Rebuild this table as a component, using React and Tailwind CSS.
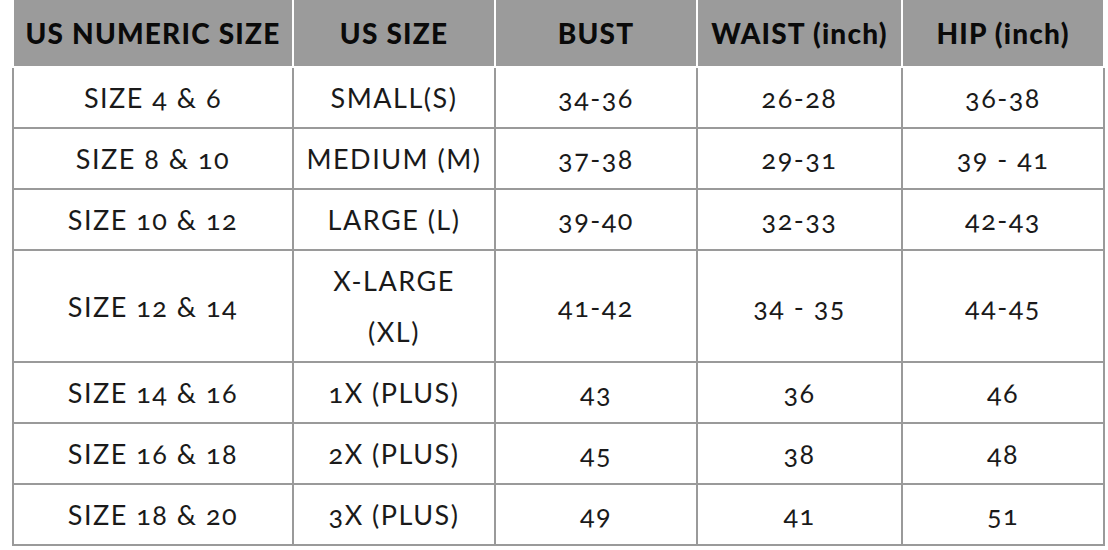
const HEADERS = ["US NUMERIC SIZE", "US SIZE", "BUST", "WAIST (inch)", "HIP (inch)"];

const ROWS = [
  ["SIZE 4 & 6", "SMALL(S)", "34-36", "26-28", "36-38"],
  ["SIZE 8 & 10", "MEDIUM (M)", "37-38", "29-31", "39 - 41"],
  ["SIZE 10 & 12", "LARGE (L)", "39-40", "32-33", "42-43"],
  ["SIZE 12 & 14", "X-LARGE (XL)", "41-42", "34 - 35", "44-45"],
  ["SIZE 14 & 16", "1X (PLUS)", "43", "36", "46"],
  ["SIZE 16 & 18", "2X (PLUS)", "45", "38", "48"],
  ["SIZE 18 & 20", "3X (PLUS)", "49", "41", "51"],
];

// column boxes incl. borders: 282 / 202 / 202 / 205 / 202
const COL_W = ["w-[282px]", "w-[202px]", "w-[202px]", "w-[205px]", "w-[202px]"];

export default function App() {
  return (
    <div className="w-[1108px] h-[550px] bg-white font-['Lato','Liberation_Sans',sans-serif] overflow-hidden">
      <div className="ml-[12px] w-[1093px] flex flex-col">
        {/* Header */}
        <div className="flex">
          {HEADERS.map((h, i) => (
            <div
              key={h}
              className={`${COL_W[i]} h-[68px] bg-[#9b9b9b] border-b-2 border-r-2 border-white ${i === 0 ? "border-l-2" : ""} flex items-center justify-center whitespace-nowrap text-[28px] font-black text-[#0a0a0a] tracking-[1.2px]`}
            >
              {h}
            </div>
          ))}
        </div>

        {/* Body */}
        {ROWS.map((row, r) => (
          <div key={r} className="flex">
            {row.map((cell, i) => (
              <div
                key={i}
                className={`${COL_W[i]} border-b-2 border-r-2 border-[#9a9a9a] ${i === 0 ? "border-l-2" : ""} py-[4px] flex items-center justify-center text-center text-[27px] leading-[51px] tracking-[1.5px] text-[#1a1a1a] oldstyle-nums ${r === 3 && i === 1 ? "px-[30px]" : ""}`}
              >
                {cell}
              </div>
            ))}
          </div>
        ))}
      </div>
    </div>
  );
}
